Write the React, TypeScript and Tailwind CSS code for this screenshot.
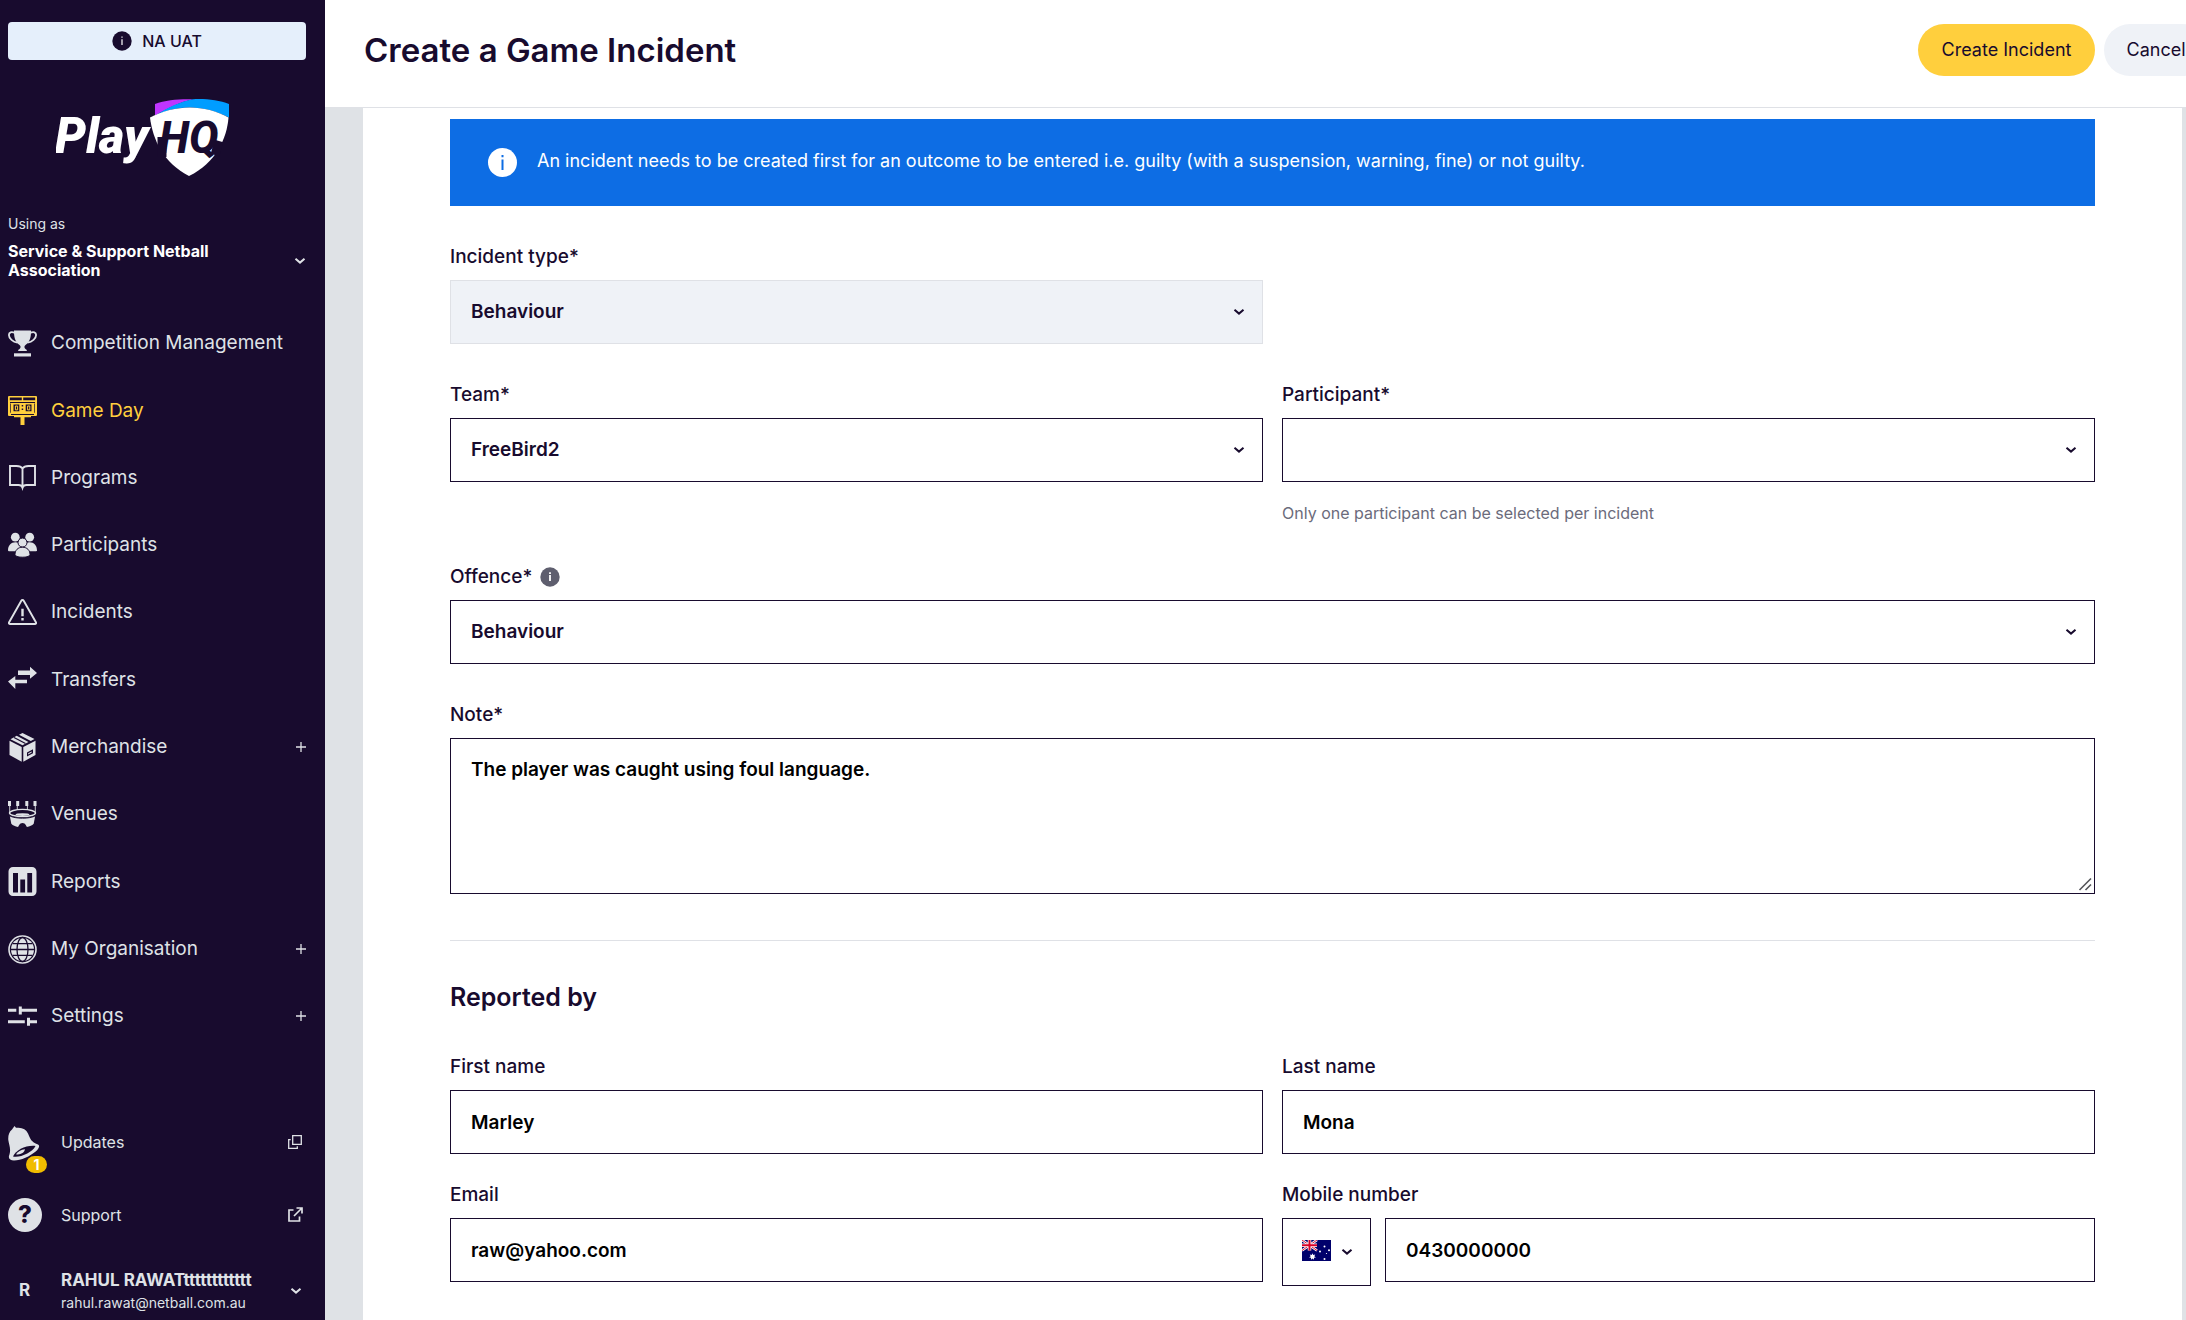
import React from "react";

type IconProps = { className?: string };

const INK = "#180b2e";

function Chevron({ className = "" }: IconProps) {
  return (
    <svg viewBox="0 0 12 8" className={`h-2 w-3 ${className}`} fill="none" stroke="currentColor" strokeWidth="2" aria-hidden="true">
      <path d="M1.5 1.8 6 5.6l4.5-3.8" />
    </svg>
  );
}

function Plus() {
  return (
    <svg viewBox="0 0 10 10" className="size-[10px]" stroke="currentColor" strokeWidth="1.3" aria-hidden="true">
      <path d="M5 0v10M0 5h10" />
    </svg>
  );
}

function NavIcon({ children }: { children: React.ReactNode }) {
  return (
    <svg viewBox="0 0 29 29" className="size-[29px] shrink-0" fill="currentColor" aria-hidden="true">
      {children}
    </svg>
  );
}

const TrophyIcon = (
  <NavIcon>
    <path d="M6 1.5h17v1.2c.1 6.500-2 11-5.500 13.300-1.100.8-1.500 2-.5 3.400.5.8 1.800 1 1.800 1.700v1H10.200v-1c0-.7 1.300-.9 1.800-1.700 1-1.400.6-2.600-.5-3.400C8 13.700 5.900 9.200 6 2.700Z" />
    <path d="M7 4C3.500 2.200.9 3.200.9 6c0 3.500 4 6.800 8.600 7.600M22 4c3.500-1.800 6.100-.8 6.100 2 0 3.500-4 6.800-8.600 7.600" fill="none" stroke="currentColor" strokeWidth="1.800" />
    <path d="M6 24.300h17v3.200H6z" />
  </NavIcon>
);

const ScoreboardIcon = (
  <NavIcon>
    <path fillRule="evenodd" d="M1 0h27a1 1 0 0 1 1 1v18a1 1 0 0 1-1 1H23v1.300h-6.500V29h-4v-7.700H6V20H1a1 1 0 0 1-1-1V1a1 1 0 0 1 1-1Zm.8 1.600v2.600h12V1.600Zm13.400 0v2.600h12V1.600ZM2 6v1h25V6ZM3 18v.900h23V18Z" />
    <g fill={INK}>
      <path d="M5.500 8.500h5.800v6.800H5.500zM17.700 8.500h5.800v6.800h-5.800zM13.700 9h1.500v1.500h-1.500zM13.700 12.500h1.500V14h-1.500z" />
      <path d="M2.200 7.500h.7v9.300h-.7zM26.100 7.500h.7v9.300h-.7z" />
    </g>
    <path d="M7.400 10v3.900h2.200V10zM19.600 10v3.900h2.200V10z" fill="none" stroke="currentColor" strokeWidth="1" />
  </NavIcon>
);

const BookIcon = (
  <NavIcon>
    <path d="M14.500 4.600C13.300 2.600 11 2 8.500 2H2v19h8.500c2 0 3.400.7 4 2.700.6-2 2-2.700 4-2.700H27V2h-6.500c-2.500 0-4.800.6-6 2.600Zm0 0v18" fill="none" stroke="currentColor" strokeWidth="1.900" />
  </NavIcon>
);

const PeopleIcon = (
  <NavIcon>
    <circle cx="7.300" cy="6.200" r="4.400" />
    <circle cx="21.700" cy="6.200" r="4.400" />
    <path d="M0 19.500C0 14.500 3 11.300 7.500 11.300s6.500 3 6.500 9H1.500C.6 20.300 0 20.100 0 19.500ZM29 19.500c0-5-3-8.200-7.500-8.200s-6.500 3-6.500 9h12.500c.900 0 1.500-.2 1.500-.8Z" />
    <g stroke={INK} strokeWidth="1">
      <circle cx="14.500" cy="11.600" r="4.500" />
      <path d="M7 23.500c0-4.200 3-7.300 7.500-7.300s7.500 3.100 7.500 7.300c0 1.500-3 2.700-7.500 2.700S7 25 7 23.500Z" />
    </g>
  </NavIcon>
);

const WarningIcon = (
  <NavIcon>
    <path d="M13.300 2.700 1.100 24.200c-.5.9 0 1.800 1 1.800h24.800c1 0 1.500-.9 1-1.800L15.700 2.700c-.5-.900-1.900-.900-2.400 0Z" fill="none" stroke="currentColor" strokeWidth="1.900" />
    <path d="M13.300 10.700h2.400v7.500h-2.400zM13.300 20h2.400v2.400h-2.400z" />
  </NavIcon>
);

const TransferIcon = (
  <NavIcon>
    <path d="M10 5.500h12V1.800l7 6.200-7 5.800V10H10zM19 18.300H7.300v5.700L0 16.500 7.300 11v3.800H19z" />
  </NavIcon>
);

const BoxIcon = (
  <NavIcon>
    <path d="m11 1.700 3.500-1.700 12 6-3.700 2zM8.700 2.800 20.500 9l-6 3.200L2.500 6.200z" />
    <path d="M1.500 7.700 13.700 14v14.800L1.500 22z" />
    <path fillRule="evenodd" d="M15.300 14 27.500 7.700V22l-12.200 6.800ZM19 19.500v4l6-3.200v-4Zm1.200.8 3.500-1.900v1.200l-3.500 2Z" />
    <path d="m6 4.500 11.500 6" stroke={INK} strokeWidth="1.200" />
  </NavIcon>
);

const StadiumIcon = (
  <NavIcon>
    <path d="M0 1h3v5H2.200v6H1.300V6H0zM8.200 1h3v5h-1.500v4h-.9V6h-.6zM17.300 1h3v5H19.800v4h-.9V6h-1.600zM25.500 1h3v5h-.8v6h-.9V6h-1.300z" />
    <ellipse cx="14.500" cy="13" rx="13" ry="3.600" fill="none" stroke="currentColor" strokeWidth="1.400" />
    <ellipse cx="14.500" cy="14.600" rx="7" ry="1.400" />
    <path d="M1.800 15.800c6 3 19.400 3 25.400 0l-1.500 8c-1.600 1.700-4 2.700-6.700 3.200-1-.8-1.300-3.900-4.500-3.900S11 26.200 10 27c-2.700-.5-5.100-1.500-6.700-3.200Z" />
    <path d="M1.500 15.800c6 3.200 20 3.200 26 0" fill="none" stroke={INK} strokeWidth="1" />
  </NavIcon>
);

const ReportsIcon = (
  <NavIcon>
    <path fillRule="evenodd" d="M5 0h19a4.500 4.500 0 0 1 4.500 4.500v20A4.500 4.500 0 0 1 24 29H5a4.500 4.500 0 0 1-4.500-4.500v-20A4.500 4.500 0 0 1 5 0Zm0 6v19.500h5V6Zm7.300 6.500v13h4.800v-13ZM19.300 6v19.500h4.800V6Z" />
  </NavIcon>
);

const GlobeIcon = (
  <NavIcon>
    <circle cx="14.500" cy="14.500" r="13.500" fill="none" stroke="currentColor" strokeWidth="1.600" />
    <circle cx="14.500" cy="14.500" r="11.500" />
    <g fill="none" stroke={INK} strokeWidth="1.300">
      <ellipse cx="14.500" cy="14.500" rx="5.500" ry="12" />
      <path d="M2.500 14.500h24M4.500 8.700h20M4.500 20.300h20" />
    </g>
  </NavIcon>
);

const SettingsIcon = (
  <NavIcon>
    <path d="M0 6.800h8.300v3H0zM10.800 4.500h3v2.300H29v3H13.800v2.700h-3zM0 18.300h16.800v3H0zM19 15.800h3v2.500h7v3h-7v2.400h-3z" />
  </NavIcon>
);

const navItems: { label: string; icon: React.ReactNode; active?: boolean; expandable?: boolean }[] = [
  { label: "Competition Management", icon: TrophyIcon },
  { label: "Game Day", icon: ScoreboardIcon, active: true },
  { label: "Programs", icon: BookIcon },
  { label: "Participants", icon: PeopleIcon },
  { label: "Incidents", icon: WarningIcon },
  { label: "Transfers", icon: TransferIcon },
  { label: "Merchandise", icon: BoxIcon, expandable: true },
  { label: "Venues", icon: StadiumIcon },
  { label: "Reports", icon: ReportsIcon },
  { label: "My Organisation", icon: GlobeIcon, expandable: true },
  { label: "Settings", icon: SettingsIcon, expandable: true },
];

function Logo() {
  return (
    <svg viewBox="0 0 174 78" className="h-[78px] w-[174px]" role="img" aria-label="PlayHQ">
      <path d="M99 5C110 1 124-.2 137 .3 125 3 112 9 99 16.500Z" fill="#bf35ff" />
      <path d="M99 17C112 8 125 2.500 137 .3 150-.5 163 1.500 173 5v13.500C149 6 122 5 99 17Z" fill="#009dff" />
      <path d="M94 18.500C119 5 149 5 172.500 18.500 171 39 160 64 133 77 108 64 97 42 94 18.500Z" fill="#fff" />
      <path d="M106 38v20M163 42l-4 14" stroke={INK} strokeWidth="9" />
      <g fontFamily="Roboto" fontStyle="italic" fontWeight="900">
        <text x="-1" y="54" fontSize="49" fill="#fff">Play</text>
        <text x="103" y="54" fontSize="44" fontWeight="800" fill={INK}>HQ</text>
      </g>
    </svg>
  );
}

function Sidebar() {
  return (
    <aside className="flex w-[325px] shrink-0 flex-col bg-[#180b2e] pr-[19px] pl-2 pt-[22px] pb-[6px] text-[#dfe2e6]">
      <div className="flex h-[38px] items-center justify-center gap-[10px] rounded bg-[#e5effb] text-base font-medium text-[#180b2e]">
        <svg viewBox="0 0 20 20" className="size-5" aria-hidden="true">
          <circle cx="10" cy="10" r="9.700" fill={INK} />
          <path d="M10 8.200V14M10 5.500v1.300" stroke="#fff" strokeWidth="1.200" />
        </svg>
        NA UAT
      </div>
      <a href="#home" className="mt-[39px] ml-12 w-fit">
        <Logo />
      </a>
      <p className="mt-[37px] text-sm leading-5">Using as</p>
      <button type="button" className="mt-2 flex items-center justify-between text-left text-base leading-[19px] font-bold text-white">
        <span className="w-[220px]">Service &amp; Support Netball Association</span>
        <Chevron className="text-[#dfe2e6]" />
      </button>
      <nav className="mt-[30px] flex h-[740px] flex-col">
        {navItems.map((item) => (
          <a
            key={item.label}
            href="#nav"
            aria-current={item.active ? "page" : undefined}
            className={`flex flex-1 items-center gap-[14px] text-[19px] ${item.active ? "text-[#ffcf3d]" : "text-[#dfe2e6]"}`}
          >
            {item.icon}
            <span className="flex-1">{item.label}</span>
            {item.expandable && <Plus />}
          </a>
        ))}
      </nav>
      <div className="mt-[55px] flex flex-col text-base">
        <a href="#updates" className="flex h-[73px] items-center pr-1">
          <span className="relative w-[53px] pt-1">
            <svg viewBox="0 0 32 35" className="h-[35px] w-8" fill="currentColor" aria-hidden="true">
              <path d="M4 3.500 6.500 0 8 1.800c6-.800 10 1.200 12 5.700 2.500 5.500 3 8.500 10 11 2.200 1 1 4-2 6.700-6 5-15 9.300-22 9.300-3.500 0-5.700-1.500-5-4.500C3.500 23 1 19 .300 14 0 9.500 1 6 4 3.500Z" />
              <path d="M5 30.500c3-6.500 13-11.500 22.500-10.500C25 26 11 32.500 5 30.500Z" fill={INK} />
              <path d="M8 28.300c1.500-2.500 5-4.600 9-5-.5 3.300-5 6-9 5Z" />
            </svg>
            <span className="absolute top-[34px] left-[18px] flex h-[17px] w-[21px] items-center justify-center rounded-full bg-[#f0bc00] text-sm font-bold text-white">1</span>
          </span>
          <span className="flex-1">Updates</span>
          <svg viewBox="0 0 14 14" className="size-[14px]" fill="none" stroke="currentColor" strokeWidth="1.300" aria-hidden="true">
            <path d="M4.700.7h8.600v8.600H4.700zM2.700 4.700h-2v8.600h8.600v-2" />
          </svg>
        </a>
        <a href="#support" className="flex h-[73px] items-center pr-[3px]">
          <span className="w-[53px]">
            <span className="flex size-[34px] items-center justify-center rounded-full bg-[#dfe2e6] text-2xl font-extrabold text-[#180b2e]">?</span>
          </span>
          <span className="flex-1">Support</span>
          <svg viewBox="0 0 15 15" className="size-[15px]" fill="none" stroke="currentColor" strokeWidth="1.700" aria-hidden="true">
            <path d="M5.500 3H1v11h10.500V9.500M8.500 1H14v5.500M14 1 6 9" />
          </svg>
        </a>
        <button type="button" className="mt-[17px] flex items-center pr-1 text-left">
          <span className="w-[53px] pl-[11px] text-[17px] font-bold">R</span>
          <span className="flex flex-1 flex-col">
            <span className="text-[17px] leading-6 font-bold">RAHUL RAWATtttttttttttt</span>
            <span className="text-sm leading-[21px]">rahul.rawat@netball.com.au</span>
          </span>
          <Chevron />
        </button>
      </div>
    </aside>
  );
}

const controlClass = "h-16 w-full appearance-none border px-5 text-[19px] font-semibold outline-none";

function Field({ id, label, hint, extra, children }: { id: string; label: string; hint?: string; extra?: React.ReactNode; children: React.ReactNode }) {
  return (
    <div>
      <div className="mb-[11px] flex items-center gap-2">
        <label htmlFor={id} className="text-[19px] leading-6 font-medium">{label}</label>
        {extra}
      </div>
      {children}
      {hint && <p className="mt-[19px] mb-px text-base leading-6 text-[#6b6b7b]">{hint}</p>}
    </div>
  );
}

function SelectField({ id, label, value, muted, hint, extra }: { id: string; label: string; value: string; muted?: boolean; hint?: string; extra?: React.ReactNode }) {
  return (
    <Field id={id} label={label} hint={hint} extra={extra}>
      <div className="relative">
        <select
          id={id}
          defaultValue={value}
          className={`${controlClass} ${muted ? "border-[#dfe1e6] bg-[#eff2f7]" : "border-[#180b2e] bg-white"}`}
        >
          <option value={value}>{value}</option>
        </select>
        <Chevron className="pointer-events-none absolute top-7 right-[18px]" />
      </div>
    </Field>
  );
}

function InputField({ id, label, value, type = "text" }: { id: string; label: string; value: string; type?: string }) {
  return (
    <Field id={id} label={label}>
      <input id={id} type={type} defaultValue={value} className={`${controlClass} border-[#180b2e] text-black`} />
    </Field>
  );
}

function AustraliaFlag() {
  return (
    <svg viewBox="0 0 58 42" className="h-[21px] w-[29px]" aria-hidden="true">
      <path d="M0 0h58v42H0z" fill="#00006b" />
      <path d="m0 0 30 21M30 0 0 21" stroke="#fff" strokeWidth="5" />
      <path d="m0 0 30 21M30 0 0 21" stroke="#d80027" strokeWidth="1.800" />
      <path d="M15 0v21M0 10.500h30" stroke="#fff" strokeWidth="7" />
      <path d="M15 0v21M0 10.500h30" stroke="#d80027" strokeWidth="4" />
      <g fill="#fff">
        <path d="m21 26.500 1.500 3.700 4-1-1.900 3.500 3.200 2.400-4 .6.300 4-3.100-2.600-3.100 2.600.3-4-4-.6 3.200-2.400-1.900-3.500 4 1Z" />
        <circle cx="45" cy="13" r="2" />
        <circle cx="54" cy="20.500" r="2" />
        <circle cx="36" cy="23" r="2" />
        <circle cx="45" cy="38" r="2" />
        <circle cx="49" cy="27" r="1.200" />
      </g>
    </svg>
  );
}

export default function App() {
  return (
    <div className="flex min-h-screen overflow-hidden bg-[#dfe2e6] font-[Inter,sans-serif] text-[#180b2e]">
      <Sidebar />
      <main className="flex min-w-0 flex-1 flex-col">
        <header className="flex items-start justify-between border-b border-[#dfe1e6] bg-white pt-6 pb-[31px] pl-[39px]">
          <h1 className="text-[33px] leading-[52px] font-semibold">Create a Game Incident</h1>
          <div className="-mr-[22px] flex shrink-0 gap-[9px]">
            <button type="button" className="h-[52px] min-w-[177px] rounded-full bg-[#ffcf3d] text-lg">Create Incident</button>
            <button type="button" className="h-[52px] min-w-[104px] rounded-full bg-[#eff2f7] text-lg">Cancel</button>
          </div>
        </header>
        <form className="mr-1 ml-[38px] flex-1 bg-white px-[87px] pt-[11px] pb-8">
          <div className="flex h-[87px] items-center gap-5 bg-[#0d6de4] pl-[38px] text-lg text-white">
            <svg viewBox="0 0 29 29" className="size-[29px]" aria-hidden="true">
              <circle cx="14.500" cy="14.500" r="14.500" fill="#fff" />
              <path d="M14.500 11.500V22M14.500 7v2.200" stroke="#0d6de4" strokeWidth="2" />
            </svg>
            <p className="pb-[3px]">An incident needs to be created first for an outcome to be entered i.e. guilty (with a suspension, warning, fine) or not guilty.</p>
          </div>

          <div className="mt-[39px] grid grid-cols-2 gap-x-[19px] gap-y-[39px]">
            <div className="col-span-2 grid grid-cols-2 gap-x-[19px]">
              <SelectField id="incident-type" label="Incident type*" value="Behaviour" muted />
            </div>
            <SelectField id="team" label="Team*" value="FreeBird2" />
            <SelectField id="participant" label="Participant*" value="" hint="Only one participant can be selected per incident" />
            <div className="col-span-2">
              <SelectField
                id="offence"
                label="Offence*"
                value="Behaviour"
                extra={
                  <svg viewBox="0 0 20 20" className="size-5" aria-hidden="true">
                    <circle cx="10" cy="10" r="9.700" fill="#5e5e6e" />
                    <path d="M10 8v6M10 5.300V7" stroke="#fff" strokeWidth="1.800" />
                  </svg>
                }
              />
            </div>
            <div className="col-span-2">
              <Field id="note" label="Note*">
                <div className="relative">
                  <textarea
                    id="note"
                    defaultValue="The player was caught using foul language."
                    className="block h-[156px] w-full border border-[#180b2e] px-5 py-[17px] text-[19px] font-semibold text-black outline-none"
                  />
                  <svg viewBox="0 0 16 16" className="pointer-events-none absolute right-px bottom-px size-4 bg-white" stroke="#55555a" strokeWidth="1.600" aria-hidden="true">
                    <path d="M1.500 13 13 1.500M7.500 13 13 7.500" />
                  </svg>
                </div>
              </Field>
            </div>
          </div>

          <hr className="mt-[46px] border-[#dfe1e6]" />
          <h2 className="mt-10 text-[25px] leading-8 font-semibold">Reported by</h2>

          <div className="mt-[42px] grid grid-cols-2 gap-x-[19px] gap-y-[29px]">
            <InputField id="first-name" label="First name" value="Marley" />
            <InputField id="last-name" label="Last name" value="Mona" />
            <InputField id="email" label="Email" value="raw@yahoo.com" type="email" />
            <Field id="mobile" label="Mobile number">
              <div className="flex items-start gap-[14px]">
                <button type="button" aria-label="Country" aria-haspopup="listbox" className="flex h-[68px] w-[89px] shrink-0 items-center gap-[10px] border border-[#180b2e] pb-1 pl-[19px]">
                  <AustraliaFlag />
                  <Chevron className="mt-1" />
                </button>
                <input id="mobile" type="tel" defaultValue="0430000000" className={`${controlClass} border-[#180b2e] text-black`} />
              </div>
            </Field>
          </div>
        </form>
      </main>
    </div>
  );
}
